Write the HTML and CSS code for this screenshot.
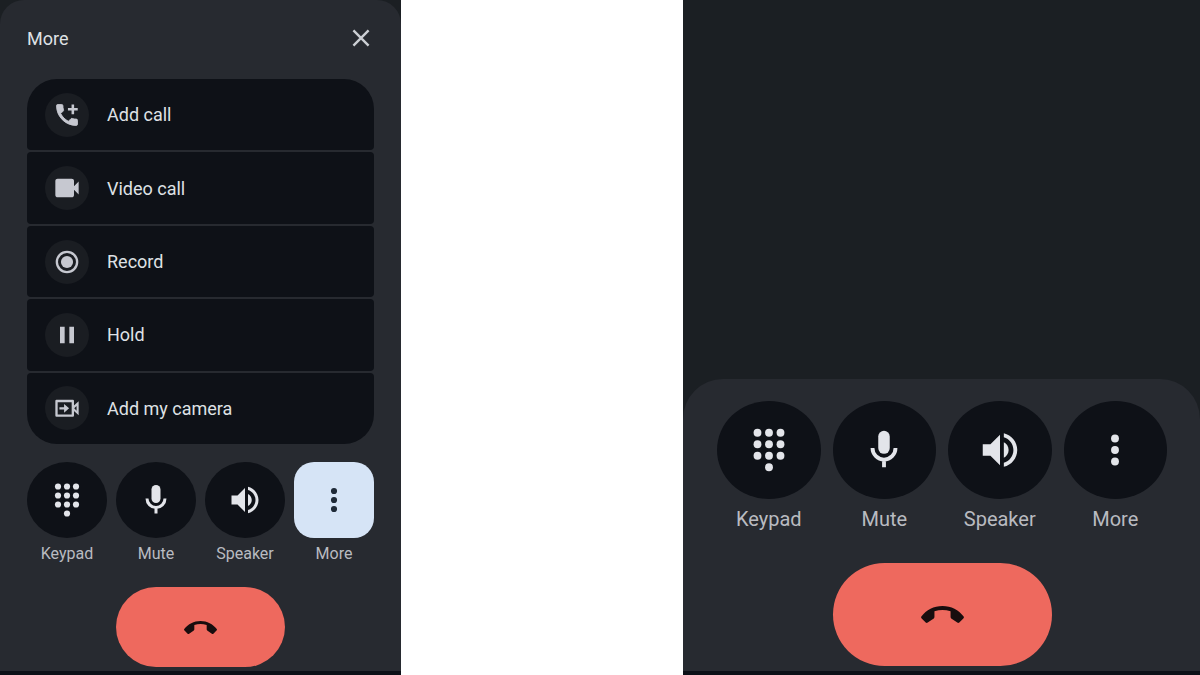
FILE: index.html
```html
<!DOCTYPE html>
<html lang="en">
<head>
<meta charset="utf-8">
<meta name="viewport" content="width=device-width, initial-scale=1">
<title>Call controls</title>
<link rel="stylesheet" href="styles.css">
</head>
<body>
<svg class="sprite" aria-hidden="true">
  <symbol id="close" viewBox="0 0 24 24"><path d="M5 5 19 19M19 5 5 19" fill="none" stroke="currentColor" stroke-width="2.2"/></symbol>
  <symbol id="add-call" viewBox="0 0 24 24"><path d="M20 15.5c-1.25 0-2.45-.2-3.57-.57-.35-.11-.74-.03-1.02.24l-2.2 2.2c-2.83-1.44-5.15-3.75-6.59-6.59l2.2-2.21c.28-.26.36-.65.25-1C8.7 6.45 8.5 5.25 8.5 4c0-.55-.45-1-1-1H4c-.55 0-1 .45-1 1 0 9.39 7.61 17 17 17 .55 0 1-.45 1-1v-3.5c0-.55-.45-1-1-1z" stroke="currentColor" stroke-width=".7"/><path d="M21.200 6h-3.100V2.900h-2.200V6h-3.100v2.200h3.100v3.100h2.200V8.200h3.100z"/></symbol>
  <symbol id="video" viewBox="0 0 24 24"><path d="M4 20q-.825 0-1.412-.587T2 18V6q0-.825.588-1.412T4 4h12q.825 0 1.413.588T18 6v4.5l4-4v11l-4-4V18q0 .825-.587 1.413T16 20z"/></symbol>
  <symbol id="record" viewBox="0 0 24 24"><circle cx="12" cy="12" r="8.700" fill="none" stroke="currentColor" stroke-width="2"/><circle cx="12" cy="12" r="5.2"/></symbol>
  <symbol id="hold" viewBox="0 0 24 24"><path d="M6 5h4v14H6zM14 5h4v14h-4z"/></symbol>
  <symbol id="camera" viewBox="0 0 24 24"><path d="M3 6h14v12.500H3z" fill="none" stroke="currentColor" stroke-width="2" stroke-linejoin="round"/><path d="M17 10.800 22 6.300v12l-5-4.500zM20.200 10.300 18.200 12.300l2 2z" fill-rule="evenodd"/><path d="M5.500 11.300h4V8.600l4.300 3.700-4.300 3.700v-2.700h-4z"/></symbol>
  <symbol id="keypad" viewBox="0 0 24 24"><circle cx="6" cy="3" r="2.050"/><circle cx="12" cy="3" r="2.050"/><circle cx="18" cy="3" r="2.050"/><circle cx="6" cy="9" r="2.050"/><circle cx="12" cy="9" r="2.050"/><circle cx="18" cy="9" r="2.050"/><circle cx="6" cy="15" r="2.050"/><circle cx="12" cy="15" r="2.050"/><circle cx="18" cy="15" r="2.050"/><circle cx="12" cy="21" r="2.050"/></symbol>
  <symbol id="mic" viewBox="0 0 24 24"><rect x="9" y="2" width="6" height="12" rx="3"/><path d="M6 11a6 6 0 0 0 12 0M12 17v4" fill="none" stroke="currentColor" stroke-width="2"/></symbol>
  <symbol id="speaker" viewBox="0 0 24 24"><path d="M3 9v6h4l5 5V4L7 9H3zm13.500 3c0-1.770-1.020-3.290-2.500-4.030v8.050c1.480-.730 2.500-2.250 2.500-4.020zM14 3.230v2.060c2.890.860 5 3.540 5 6.710s-2.110 5.850-5 6.710v2.060c4.010-.910 7-4.490 7-8.770s-2.990-7.860-7-8.770z"/></symbol>
  <symbol id="dots" viewBox="0 0 24 24"><circle cx="12" cy="6" r="2.050"/><circle cx="12" cy="12" r="2.050"/><circle cx="12" cy="18" r="2.050"/></symbol>
  <symbol id="hangup" viewBox="0 0 128 50"><path d="M1 31C16 12 38 0 64 0s48 12 63 31q2 3-1 6l-12 12q-3 2-6 0L90 37q-2-2-2-5V15Q64 8 40 15v17q0 3-2 5L20 49q-3 2-6 0L2 37q-3-3-1-6z"/></symbol>
</svg>

<main class="screens">
  <section class="screen" aria-label="More options">
    <div class="sheet sheet-menu">
      <header class="sheet-header">
        <h1 class="title">More</h1>
        <button class="close" type="button" aria-label="Close"><svg class="icon"><use href="#close"/></svg></button>
      </header>
      <ul class="menu">
        <li class="menu-item"><button class="menu-button" type="button"><span class="badge"><svg class="icon"><use href="#add-call"/></svg></span>Add call</button></li>
        <li class="menu-item"><button class="menu-button" type="button"><span class="badge"><svg class="icon"><use href="#video"/></svg></span>Video call</button></li>
        <li class="menu-item"><button class="menu-button" type="button"><span class="badge"><svg class="icon"><use href="#record"/></svg></span>Record</button></li>
        <li class="menu-item"><button class="menu-button" type="button"><span class="badge"><svg class="icon"><use href="#hold"/></svg></span>Hold</button></li>
        <li class="menu-item"><button class="menu-button" type="button"><span class="badge"><svg class="icon"><use href="#camera"/></svg></span>Add my camera</button></li>
      </ul>
      <div class="controls">
        <button class="control" type="button"><span class="disc"><svg class="icon"><use href="#keypad"/></svg></span>Keypad</button>
        <button class="control" type="button"><span class="disc"><svg class="icon"><use href="#mic"/></svg></span>Mute</button>
        <button class="control" type="button"><span class="disc"><svg class="icon"><use href="#speaker"/></svg></span>Speaker</button>
        <button class="control" type="button" aria-pressed="true"><span class="disc disc-active"><svg class="icon"><use href="#dots"/></svg></span>More</button>
        <button class="end" type="button" aria-label="End call"><svg class="hangup"><use href="#hangup"/></svg></button>
      </div>
    </div>
  </section>

  <section class="screen" aria-label="Call in progress">
    <div class="sheet sheet-call">
      <div class="controls controls-large">
        <button class="control" type="button"><span class="disc"><svg class="icon"><use href="#keypad"/></svg></span>Keypad</button>
        <button class="control" type="button"><span class="disc"><svg class="icon"><use href="#mic"/></svg></span>Mute</button>
        <button class="control" type="button"><span class="disc"><svg class="icon"><use href="#speaker"/></svg></span>Speaker</button>
        <button class="control" type="button"><span class="disc"><svg class="icon"><use href="#dots"/></svg></span>More</button>
        <button class="end" type="button" aria-label="End call"><svg class="hangup"><use href="#hangup"/></svg></button>
      </div>
    </div>
  </section>
</main>
</body>
</html>
```
FILE: styles.css
```css
* {
  box-sizing: border-box;
}

body {
  margin: 0;
  background: #ffffff;
  color: #dfe1e5;
  font-family: Roboto, "Liberation Sans", sans-serif;
}

button {
  margin: 0;
  padding: 0;
  border: 0;
  background: none;
  color: inherit;
  font: inherit;
  cursor: pointer;
}

.sprite {
  display: none;
}

.icon,
.hangup {
  display: block;
  fill: currentColor;
}

.screens {
  display: grid;
  grid-template-columns: 401fr 517fr;
  column-gap: 23.5%;
  min-height: 100vh;
}

.screen {
  display: flex;
  flex-direction: column;
  justify-content: flex-end;
  background: #1b1f23;
  border-bottom: 4px solid #0c1017;
}

.sheet {
  background: #272a30;
}

.sheet-menu {
  flex: 1;
  padding: 20px 27px 4px;
  border-radius: 24px 24px 0 0;
}

.sheet-call {
  padding: 22px 33px 5px 34px;
  border-radius: 40px 40px 0 0;
}

.sheet-header {
  display: flex;
  align-items: center;
  justify-content: space-between;
  height: 36px;
  margin-bottom: 23px;
}

.title {
  margin: 0;
  font-size: 18px;
  font-weight: 400;
}

.close {
  color: #cccfd4;
}

.close .icon {
  width: 26px;
  height: 26px;
}

.menu {
  display: flex;
  flex-direction: column;
  gap: 2px;
  min-height: 365px;
  margin: 0 0 18px;
  padding: 0;
  border-radius: 30px;
  overflow: hidden;
  list-style: none;
}

.menu-item {
  display: flex;
  flex: 1;
  border-radius: 4px;
  background: #0e1117;
}

.menu-button {
  display: flex;
  flex: 1;
  align-items: center;
  gap: 18px;
  padding: 0 18px;
  font-size: 18px;
  text-align: left;
}

.badge {
  display: grid;
  place-items: center;
  width: 44px;
  height: 44px;
  border-radius: 50%;
  background: #1a1d22;
  color: #c6c8d0;
}

.badge .icon {
  width: 28px;
  height: 28px;
}

.controls {
  display: grid;
  grid-template-columns: repeat(4, 1fr);
  column-gap: 9px;
  row-gap: 23px;
}

.control {
  display: flex;
  flex-direction: column;
  gap: 6px;
  align-items: center;
  color: #b9bbc0;
  font-size: 16px;
  line-height: 20px;
}

.disc {
  display: grid;
  place-items: center;
  width: 100%;
  height: 76px;
  border-radius: 50%;
  background: #0e1117;
  color: #e3e5ea;
}

.disc .icon {
  width: 36px;
  height: 36px;
}

.disc-active {
  border-radius: 20px;
  background: #d6e4f6;
  color: #1f2a38;
}

.end {
  display: grid;
  grid-column: 2 / 4;
  place-items: center;
  height: 80px;
  border-radius: 40px;
  background: #ee695e;
  color: #180d0e;
}

.hangup {
  width: 33px;
  height: 13px;
}

.controls-large {
  column-gap: 12px;
  row-gap: 32px;
}

.controls-large .control {
  gap: 8px;
  font-size: 20px;
  line-height: 24px;
}

.controls-large .disc {
  height: 98px;
}

.controls-large .disc .icon {
  width: 46px;
  height: 46px;
}

.controls-large .end {
  height: 103px;
  border-radius: 52px;
}

.controls-large .hangup {
  width: 43px;
  height: 17px;
}
```
